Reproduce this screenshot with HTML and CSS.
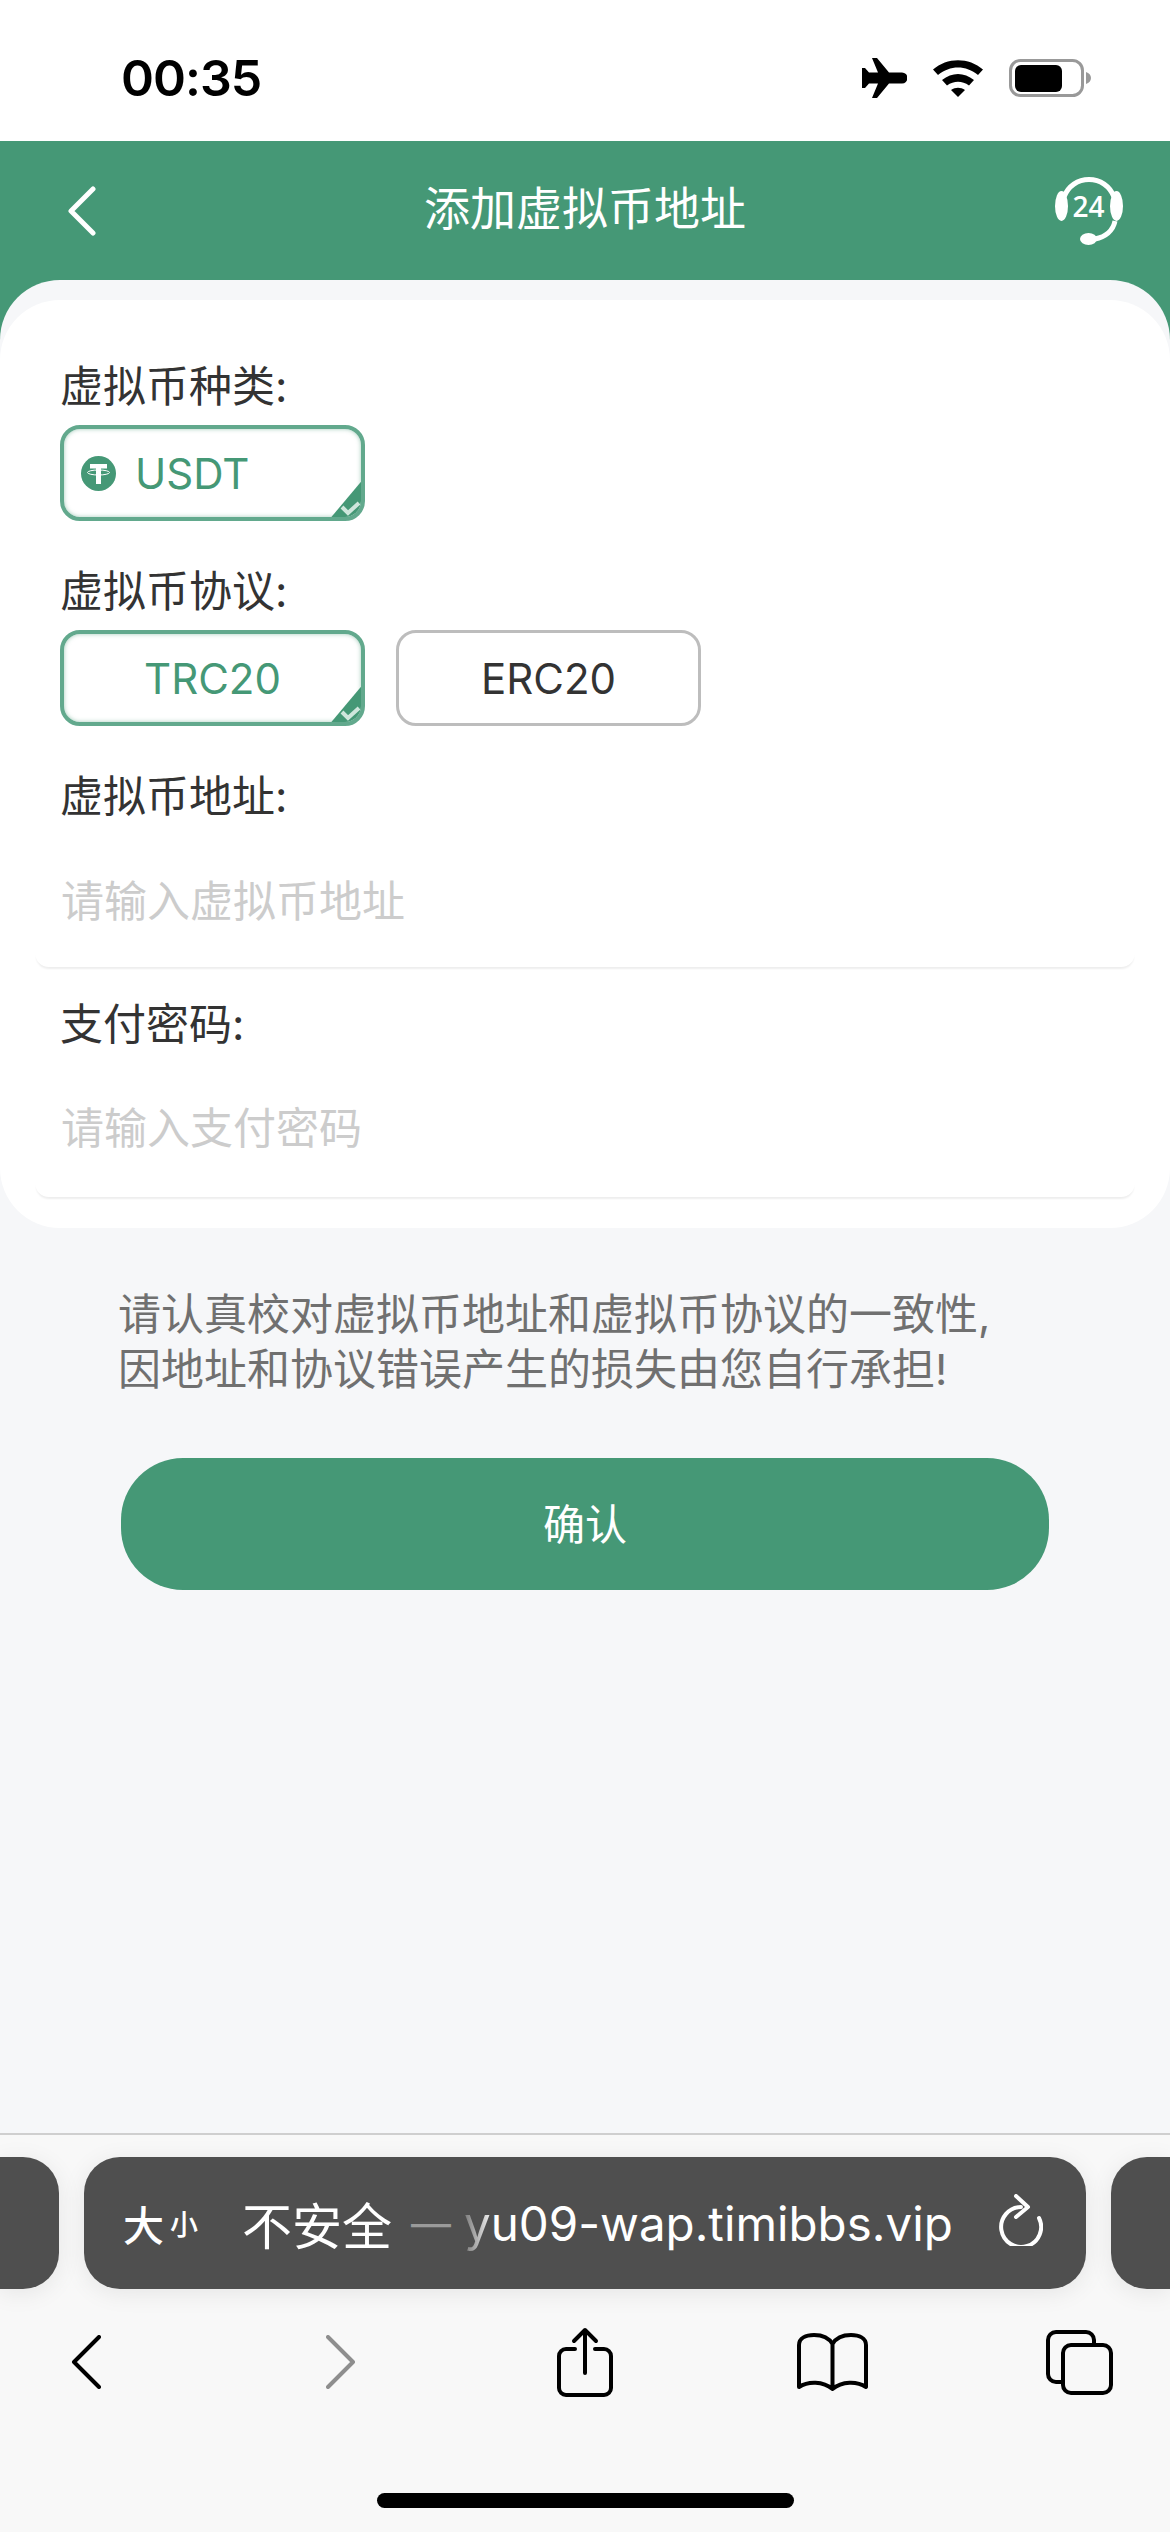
FILE: index.html
```html
<!DOCTYPE html>
<html>
<head>
    <meta charset="UTF-8">
    <meta name="viewport" content="width=device-width, initial-scale=1.0">
    <title>添加虚拟币地址</title>
    <link rel="stylesheet" href="styles.css">
</head>
<body>
    <div class="page">
        <!-- Status bar -->
        <div class="status-bar">
            <span class="time">00:35</span>
            <div class="status-icons">
                <svg class="icon-plane" viewBox="0 0 46 40"><path d="M11 0h5l12 14.500h13a5.500 5.500 0 0 1 0 11H28L16 40h-5l6-14.500H8L4 30H1V10h3l4 4.500h9z"/></svg>
                <svg class="icon-wifi" viewBox="0 0 50 37"><path d="M0 9.500C14-3 36-3 50 9.500l-5 5.500C33 5 17 5 5 15z"/><path d="M9 20c10-8 22-8 32 0l-5 5.500c-7-5-15-5-22 0z"/><path d="M18 30c4.500-3 9.500-3 14 0l-7 7z"/></svg>
                <svg class="icon-battery" viewBox="0 0 82 38"><rect x="1.500" y="1.500" width="72" height="35" rx="10" fill="none" stroke="#999" stroke-width="3"/><rect x="6" y="6" width="47" height="27" rx="6"/><path d="M77 13c3 1 5 3 5 6s-2 5-5 6z" fill="#999"/></svg>
            </div>
        </div>

        <!-- Header -->
        <div class="header">
            <svg class="icon-back" viewBox="0 0 30 50"><path d="M26 3L4 25l22 22"/></svg>
            <h1 class="header-title">添加虚拟币地址</h1>
            <svg class="icon-service" viewBox="0 0 68 68">
                <path class="service-line" d="M9 20C13 9 23 2.500 34 2.500S55 9 59 20"/>
                <path class="service-line" d="M60 44C58 54 50 60 40 62"/>
                <ellipse cx="6.500" cy="29" rx="6.500" ry="15"/>
                <ellipse cx="61.500" cy="29" rx="6.500" ry="15"/>
                <ellipse cx="33.500" cy="62" rx="8.500" ry="6"/>
                <text x="33.500" y="40" class="service-text">24</text>
            </svg>
        </div>

        <!-- Form card -->
        <div class="sheet">
            <div class="form-card">
                <div class="label">虚拟币种类:</div>
                <div class="options">
                    <div class="option active">
                        <svg class="icon-tether" viewBox="0 0 35 35">
                            <circle cx="17.500" cy="17.500" r="17.500"/>
                            <path class="tether-t" d="M9 8h17v4.500h-6V28h-5V12.500H9z"/>
                            <ellipse class="tether-ring" cx="17.500" cy="16.500" rx="11" ry="2.500"/>
                        </svg>
                        <span class="option-text">USDT</span>
                        <svg class="corner" viewBox="0 0 37 44"><path class="corner-bg" d="M37 0V44H0z"/><path class="corner-check" d="M14 30l6 6 11-10"/></svg>
                    </div>
                </div>

                <div class="label label-next">虚拟币协议:</div>
                <div class="options">
                    <div class="option active center">
                        <span class="option-text">TRC20</span>
                        <svg class="corner" viewBox="0 0 37 44"><path class="corner-bg" d="M37 0V44H0z"/><path class="corner-check" d="M14 30l6 6 11-10"/></svg>
                    </div>
                    <div class="option center">
                        <span class="option-text">ERC20</span>
                    </div>
                </div>

                <div class="label label-next">虚拟币地址:</div>
                <div class="field field-first">
                    <input type="text" placeholder="请输入虚拟币地址">
                </div>

                <div class="label label-pay">支付密码:</div>
                <div class="field">
                    <input type="password" placeholder="请输入支付密码">
                </div>
            </div>
        </div>

        <p class="notice">请认真校对虚拟币地址和虚拟币协议的一致性,<br>因地址和协议错误产生的损失由您自行承担!</p>
        <button class="btn-confirm">确认</button>

        <!-- Browser bar -->
        <div class="browser">
            <div class="url-row">
                <div class="tab-peek left"></div>
                <div class="url-bar">
                    <span class="text-size"><span class="big">大</span><span class="small">小</span></span>
                    <span class="not-safe">不安全</span>
                    <span class="dash">—</span>
                    <span class="url"><span class="url-fade">y</span>u09-wap.timibbs.vip</span>
                    <svg class="icon-reload" viewBox="0 0 44 52"><path d="M22 13A20 20 0 1 0 40 24"/><path d="M17 2l12 11-12 10"/></svg>
                </div>
                <div class="tab-peek right"></div>
            </div>
            <div class="toolbar">
                <svg class="tool-chevron" viewBox="0 0 30 54"><path d="M28 2L3 27l25 25"/></svg>
                <svg class="tool-chevron disabled" viewBox="0 0 30 54"><path d="M2 2l25 25L2 52"/></svg>
                <svg class="tool-share" viewBox="0 0 56 70"><path d="M18 22H9a7 7 0 0 0-7 7v32a7 7 0 0 0 7 7h38a7 7 0 0 0 7-7V29a7 7 0 0 0-7-7h-9"/><path d="M28 46V3M17 14L28 3l11 11"/></svg>
                <svg class="tool-book" viewBox="0 0 71 58"><path d="M35.500 54V11C32 5 25 2 17 2 9 2 2 5 2 12v42c9-6 24-6 33.500 2 9.500-8 24.500-8 33.500-2V12c0-7-7-10-15-10-8 0-15 3-18.500 9"/></svg>
                <svg class="tool-tabs" viewBox="0 0 67 65"><rect x="2" y="2" width="46" height="50" rx="8"/><rect class="tab-front" x="17" y="15" width="48" height="48" rx="8"/></svg>
            </div>
            <div class="home-bar"></div>
        </div>
    </div>
</body>
</html>
```

FILE: styles.css
```css
* {
    box-sizing: border-box;
}
body {
    margin: 0;
    font-family: "Inter", "Noto Sans CJK SC", sans-serif;
    background: #f6f7f9;
    color: #333;
}
.page {
    width: 1170px;
    height: 2532px;
    display: flex;
    flex-direction: column;
    overflow: hidden;
}

/* status bar */
.status-bar {
    height: 141px;
    background: #fff;
    display: flex;
    justify-content: space-between;
    align-items: center;
    padding: 15px 79px 0 121px;
    flex-shrink: 0;
}
.time {
    font-size: 50px;
    font-weight: 600;
    color: #000;
    letter-spacing: -1px;
}
.status-icons {
    display: flex;
    align-items: center;
}
.icon-plane {
    width: 46px;
    height: 40px;
}
.icon-wifi {
    width: 50px;
    height: 37px;
    margin-left: 26px;
}
.icon-battery {
    width: 82px;
    height: 38px;
    margin-left: 26px;
}

/* header */
.header {
    height: 199px;
    margin-bottom: -60px;
    padding: 0 47px 60px 67px;
    background: #459876;
    display: flex;
    align-items: center;
    flex-shrink: 0;
}
.icon-back {
    width: 30px;
    height: 50px;
    margin-right: 18px;
    fill: none;
    stroke: #fff;
    stroke-width: 5;
    stroke-linecap: round;
    stroke-linejoin: round;
}
.header-title {
    flex: 1;
    margin: 0;
    padding-bottom: 6px;
    text-align: center;
    font-size: 46px;
    font-weight: 400;
    color: #fff;
    line-height: 60px;
}
.icon-service {
    width: 68px;
    height: 68px;
    fill: #fff;
}
.service-line {
    fill: none;
    stroke: #fff;
    stroke-width: 5;
}
.service-text {
    font-family: "Open Sans", sans-serif;
    font-size: 28px;
    font-weight: 600;
    text-anchor: middle;
    fill: #fff;
}

/* form card */
.sheet {
    background: #f6f7f9;
    border-radius: 60px 60px 0 0;
    padding-top: 20px;
    flex-shrink: 0;
}
.form-card {
    background: #fff;
    border-radius: 60px;
    padding: 55px 0 31px;
}
.label {
    height: 60px;
    font-size: 43px;
    line-height: 62px;
    padding-left: 60px;
    color: #333;
}
.label-next {
    margin-top: 39px;
}
.label-pay {
    margin-top: 26px;
}
.options {
    display: flex;
    gap: 31px;
    margin-top: 10px;
    padding-left: 60px;
}
.option {
    position: relative;
    width: 305px;
    height: 96px;
    border: 3px solid #bdbdbd;
    border-radius: 20px;
    display: flex;
    align-items: center;
    overflow: hidden;
    color: #333;
}
.option.center {
    justify-content: center;
}
.option.active {
    border: 4px solid #62a98d;
    box-shadow: inset 0 0 4px rgba(69, 152, 118, 0.5);
    color: #459876;
    padding-left: 17px;
}
.option.active.center {
    padding-left: 0;
}
.option-text {
    font-size: 42px;
    font-weight: 400;
}
.icon-tether {
    width: 35px;
    height: 35px;
    margin-right: 19px;
    fill: #459876;
}
.tether-t {
    fill: #fff;
}
.tether-ring {
    fill: none;
    stroke: #fff;
    stroke-width: 1;
}
.corner {
    position: absolute;
    right: -4px;
    bottom: -4px;
    width: 37px;
    height: 44px;
}
.corner-bg {
    fill: #459876;
}
.corner-check {
    fill: none;
    stroke: #cfe6dc;
    stroke-width: 4;
}
.field {
    margin: 4px 35px 0;
    height: 140px;
    padding: 0 26px 5px;
    border-radius: 0 0 14px 14px;
    box-shadow: 0 3px 2px -1px rgba(0, 0, 0, 0.07);
    display: flex;
    align-items: center;
}
.field-first {
    margin-top: 8px;
    height: 134px;
}
.field input {
    width: 100%;
    border: none;
    outline: none;
    padding: 0;
    background: transparent;
    font-family: "Noto Sans CJK SC", sans-serif;
    font-size: 43px;
    color: #333;
}
.field input::placeholder {
    color: #cccccc;
}

/* notice + button */
.notice {
    margin: 59px 0 0;
    padding-left: 118px;
    font-size: 43px;
    line-height: 55px;
    color: #707070;
}
.btn-confirm {
    display: block;
    width: 928px;
    height: 132px;
    margin: 61px 0 0 121px;
    padding: 0 0 5px;
    border: none;
    border-radius: 62px;
    background: #459876;
    color: #fff;
    font-family: "Noto Sans CJK SC", sans-serif;
    font-size: 42px;
    flex-shrink: 0;
}

/* safari bottom bar */
.browser {
    margin-top: auto;
    height: 399px;
    background: #f8f8f8;
    border-top: 2px solid #cfcfcf;
    padding-top: 22px;
    flex-shrink: 0;
    display: flex;
    flex-direction: column;
}
.url-row {
    display: flex;
    gap: 25px;
    height: 132px;
}
.tab-peek {
    width: 59px;
    background: #4f4f4f;
    box-shadow: 0 4px 24px rgba(0, 0, 0, 0.08);
}
.tab-peek.left {
    border-radius: 0 36px 36px 0;
}
.tab-peek.right {
    border-radius: 36px 0 0 36px;
}
.url-bar {
    width: 1002px;
    background: #4f4f4f;
    border-radius: 36px;
    box-shadow: 0 4px 24px rgba(0, 0, 0, 0.08);
    display: flex;
    align-items: center;
    padding: 0 43px 0 39px;
    color: #fff;
}
.text-size {
    display: flex;
    align-items: center;
    width: 119px;
    font-family: "Noto Sans CJK SC", sans-serif;
    font-weight: 500;
}
.big {
    font-size: 41px;
}
.small {
    font-size: 28px;
    margin-left: 6px;
}
.not-safe {
    font-family: "Noto Sans CJK SC", sans-serif;
    font-size: 50px;
    width: 169px;
}
.dash {
    font-size: 40px;
    color: #9a9a9a;
    width: 53px;
}
.url {
    font-size: 47.5px;
    white-space: nowrap;
}
.url-fade {
    background: linear-gradient(to right, #7a7a7a, #f0f0f0);
    -webkit-background-clip: text;
    background-clip: text;
    color: transparent;
}
.icon-reload {
    width: 44px;
    height: 52px;
    margin-left: auto;
    margin-top: -6px;
    fill: none;
    stroke: #fff;
    stroke-width: 4;
    stroke-linecap: round;
    stroke-linejoin: round;
}
.toolbar {
    display: flex;
    align-items: center;
    height: 70px;
    margin-top: 38px;
    padding-left: 71px;
}
.toolbar svg {
    fill: none;
    stroke: #000;
    stroke-width: 4;
    stroke-linecap: round;
    stroke-linejoin: round;
}
.tool-chevron {
    width: 30px;
    height: 54px;
}
.toolbar .tool-chevron.disabled {
    stroke: #8e8e8e;
    margin-left: 225px;
}
.tool-share {
    width: 56px;
    height: 70px;
    margin-left: 201px;
}
.tool-book {
    width: 71px;
    height: 58px;
    margin-left: 184px;
}
.tool-tabs {
    width: 67px;
    height: 65px;
    margin-left: 178px;
}
.tab-front {
    fill: #f8f8f8;
}
.home-bar {
    width: 417px;
    height: 15px;
    margin: 96px auto 0;
    background: #000;
    border-radius: 8px;
}
```
